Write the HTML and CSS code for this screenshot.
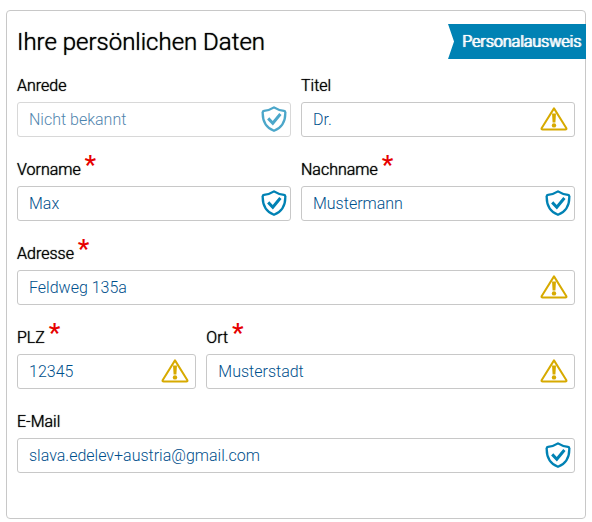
FILE: index.html
```
<!DOCTYPE html>
<html lang="de">
<head>
<meta charset="utf-8">
<title>Ihre persönlichen Daten</title>
<link rel="stylesheet" href="styles.css">
</head>
<body>
<!-- icons used inside the fields -->
<svg class="sprite" aria-hidden="true">
    <symbol id="shield" viewBox="0 0 26 26">
        <path d="M13 1.4C10.4 3.2 6.6 4.4 3 4.8Q1.7 5 1.7 6.4C1.5 14.6 5.2 21.6 13 24.8C20.8 21.6 24.5 14.6 24.3 6.4Q24.3 5 23 4.8C19.4 4.4 15.6 3.2 13 1.4Z" fill="none" stroke="currentColor" stroke-width="2.3" stroke-linejoin="round"/>
        <path d="M7.2 12.4L11.8 17.2L19.4 8" fill="none" stroke="currentColor" stroke-width="3"/>
    </symbol>
    <symbol id="warning" viewBox="0 0 28 24">
        <path d="M14 1.4L26.4 21.2Q26.8 22.6 25.4 22.6H2.6Q1.2 22.6 1.6 21.2Z" fill="none" stroke="currentColor" stroke-width="2" stroke-linejoin="round"/>
        <path d="M12 6.6H16L15.4 15.6H12.6Z" fill="currentColor"/>
        <circle cx="14" cy="18.4" r="2.2" fill="currentColor"/>
    </symbol>
</svg>

<form class="card">
    <div class="ribbon">Personalausweis</div>
    <h2>Ihre persönlichen Daten</h2>

    <div class="fields">
        <div class="field half">
            <label for="anrede">Anrede</label>
            <div class="control disabled">
                <input type="text" id="anrede" value="Nicht bekannt" disabled>
                <svg class="icon shield"><use href="#shield"/></svg>
            </div>
        </div>
        <div class="field half">
            <label for="titel">Titel</label>
            <div class="control">
                <input type="text" id="titel" value="Dr.">
                <svg class="icon warning"><use href="#warning"/></svg>
            </div>
        </div>
        <div class="field half">
            <label for="vorname">Vorname <span class="required">*</span></label>
            <div class="control">
                <input type="text" id="vorname" value="Max">
                <svg class="icon shield"><use href="#shield"/></svg>
            </div>
        </div>
        <div class="field half">
            <label for="nachname">Nachname <span class="required">*</span></label>
            <div class="control">
                <input type="text" id="nachname" value="Mustermann">
                <svg class="icon shield"><use href="#shield"/></svg>
            </div>
        </div>
        <div class="field full">
            <label for="adresse">Adresse <span class="required">*</span></label>
            <div class="control">
                <input type="text" id="adresse" value="Feldweg 135a">
                <svg class="icon warning"><use href="#warning"/></svg>
            </div>
        </div>
        <div class="field third">
            <label for="plz">PLZ <span class="required">*</span></label>
            <div class="control">
                <input type="text" id="plz" value="12345">
                <svg class="icon warning"><use href="#warning"/></svg>
            </div>
        </div>
        <div class="field two-thirds">
            <label for="ort">Ort <span class="required">*</span></label>
            <div class="control">
                <input type="text" id="ort" value="Musterstadt">
                <svg class="icon warning"><use href="#warning"/></svg>
            </div>
        </div>
        <div class="field full">
            <label for="email">E-Mail</label>
            <div class="control">
                <input type="email" id="email" value="slava.edelev+austria@gmail.com">
                <svg class="icon shield"><use href="#shield"/></svg>
            </div>
        </div>
    </div>
</form>
</body>
</html>
```
FILE: styles.css
```
* {
    box-sizing: border-box;
}

body {
    margin: 10px 6px 0;
    font-family: Roboto, sans-serif;
    font-size: 16px;
    font-weight: 300;
    color: #000;
    background-color: #fff;
}

.sprite {
    display: none;
}

.card {
    position: relative;
    padding: 15px 10px 45px;
    border: 1px solid #c8c8c8;
    border-radius: 4px;
}

h2 {
    margin: 0;
    font-size: 24px;
    font-weight: 300;
    line-height: 32px;
    text-shadow: 0 0 1px #000;
}

.ribbon {
    position: absolute;
    top: 13px;
    right: -3px;
    padding: 0 7px 0 14px;
    line-height: 35px;
    color: #fff;
    background-color: #0082b4;
    text-shadow: 1px 0 #fff, 0 0 1px #fff;
    clip-path: polygon(0 0, 100% 0, 100% 100%, 0 100%, 6px 50%);
}

.fields {
    display: grid;
    grid-template-columns: repeat(12, 1fr);
    gap: 19px 10px;
    margin-top: 14px;
}

.half {
    grid-column: span 6;
}

.full {
    grid-column: span 12;
}

.third {
    grid-column: span 4;
}

.two-thirds {
    grid-column: span 8;
}

label {
    display: block;
    height: 30px;
    line-height: 28px;
    text-shadow: 0 0 1px #000;
}

.required {
    font-size: 26px;
    font-weight: 500;
    line-height: 0;
    vertical-align: 1px;
    color: #e60000;
    text-shadow: none;
}

.control {
    position: relative;
}

input {
    display: block;
    width: 100%;
    height: 35px;
    padding: 0 40px 0 11px;
    border: 1px solid #c8c8c8;
    border-radius: 3px;
    background-color: #fff;
    font-family: inherit;
    font-size: 16px;
    font-weight: 300;
    color: #00508c;
}

.icon {
    position: absolute;
    top: 4px;
}

.shield {
    right: 4px;
    width: 26px;
    height: 26px;
    color: #0082b4;
}

.warning {
    top: 5px;
    right: 7px;
    width: 28px;
    height: 24px;
    color: #d7aa00;
}

.disabled {
    opacity: 0.7;
}
```
